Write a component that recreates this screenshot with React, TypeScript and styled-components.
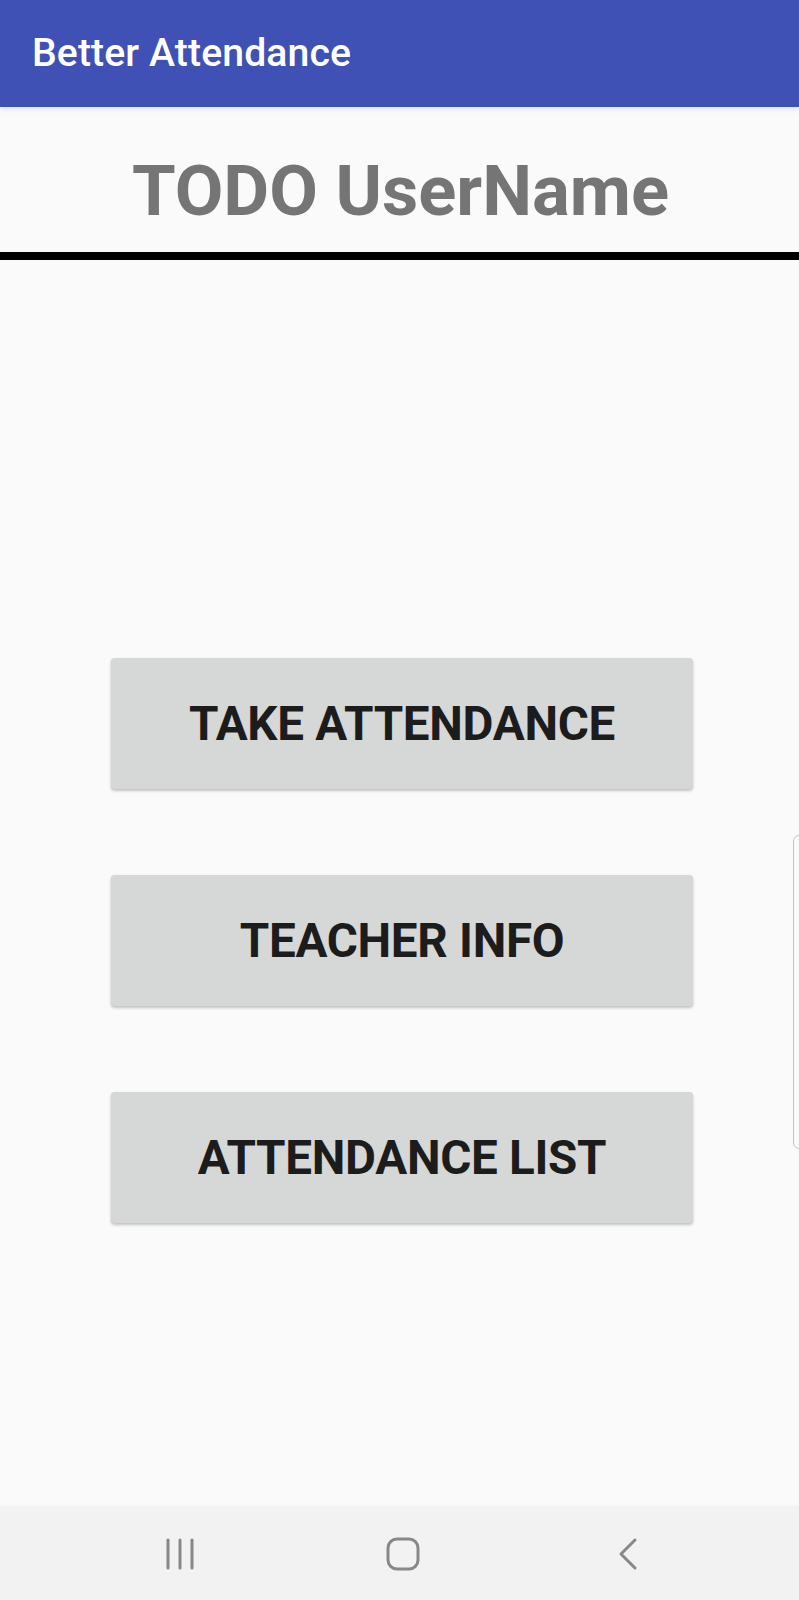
import React from "react";
import styled, { createGlobalStyle } from "styled-components";

const GlobalStyle = createGlobalStyle`
  html, body {
    margin: 0;
    padding: 0;
    background: #fafafa;
    font-family: Roboto, "Noto Sans", "Liberation Sans", sans-serif;
  }
  * { box-sizing: border-box; }
`;

const Screen = styled.div`
  position: relative;
  width: 799px;
  height: 1600px;
  display: flex;
  flex-direction: column;
  background: #fafafa;
  overflow: hidden;
`;

const AppBar = styled.header`
  height: 107px;
  flex: none;
  display: flex;
  align-items: center;
  padding-left: 32px;
  padding-bottom: 2px;
  background: #3f51b5;
  box-shadow: 0 2px 5px rgba(0, 0, 0, 0.12);
  position: relative;
  z-index: 1;
`;

const AppTitle = styled.h1`
  margin: 0;
  color: #ffffff;
  font-size: 39.2px;
  font-weight: 500;
  letter-spacing: 0.1px;
`;

const UserHeader = styled.div`
  height: 153px;
  flex: none;
  display: flex;
  align-items: center;
  justify-content: center;
  padding-top: 24px;
  border-bottom: 8px solid #000000;
`;

const UserName = styled.h2`
  margin: 0;
  color: #757575;
  font-size: 70.6px;
  font-weight: 700;
  line-height: 1;
  padding-left: 2px;
`;

const Main = styled.main`
  flex: 1;
  display: flex;
  flex-direction: column;
  gap: 86px;
  padding: 398px 0 0 111px;
`;

const ActionButton = styled.button`
  width: 582px;
  height: 131px;
  border: none;
  border-radius: 4px;
  background: #d6d7d7;
  color: #1c1c1c;
  font-family: Roboto, "Noto Sans", "Liberation Sans", sans-serif;
  font-size: 47.6px;
  font-weight: 700;
  letter-spacing: -0.3px;
  text-transform: uppercase;
  box-shadow: 0 2px 3px rgba(0, 0, 0, 0.22), 0 0 1px rgba(0, 0, 0, 0.1);
  cursor: pointer;
  padding: 0;
`;

const NavBar = styled.nav`
  height: 94px;
  flex: none;
  display: flex;
  align-items: center;
  padding-top: 2px;
  background: #f2f2f2;
`;

const NavSlot = styled.div<{ $left: number }>`
  flex: none;
  width: 40px;
  height: 40px;
  display: flex;
  align-items: center;
  justify-content: center;
  margin-left: ${(p) => p.$left}px;
`;

const EdgeHandle = styled.div`
  position: absolute;
  right: -6px;
  top: 835px;
  width: 12px;
  height: 314px;
  border: 1.5px solid #c4c4c4;
  border-radius: 6px;
`;

const RecentsIcon = () => (
  <svg width="30" height="32" viewBox="0 0 30 32" fill="none" stroke="#888888" strokeWidth="3" strokeLinecap="round">
    <line x1="3" y1="2" x2="3" y2="30" />
    <line x1="15" y1="2" x2="15" y2="30" />
    <line x1="27" y1="2" x2="27" y2="30" />
  </svg>
);

const HomeIcon = () => (
  <svg width="34" height="34" viewBox="0 0 34 34" fill="none" stroke="#888888" strokeWidth="3">
    <rect x="2" y="2" width="30" height="30" rx="9" />
  </svg>
);

const BackIcon = () => (
  <svg width="20" height="34" viewBox="0 0 20 34" fill="none" stroke="#888888" strokeWidth="3" strokeLinecap="round" strokeLinejoin="round">
    <polyline points="17,3 3,17 17,31" />
  </svg>
);

export default function App() {
  return (
    <>
      <GlobalStyle />
      <Screen>
        <AppBar>
          <AppTitle>Better Attendance</AppTitle>
        </AppBar>
        <UserHeader>
          <UserName>TODO UserName</UserName>
        </UserHeader>
        <Main>
          <ActionButton>Take Attendance</ActionButton>
          <ActionButton>Teacher Info</ActionButton>
          <ActionButton>Attendance List</ActionButton>
        </Main>
        <NavBar>
          <NavSlot $left={160}>
            <RecentsIcon />
          </NavSlot>
          <NavSlot $left={183}>
            <HomeIcon />
          </NavSlot>
          <NavSlot $left={185}>
            <BackIcon />
          </NavSlot>
        </NavBar>
        <EdgeHandle />
      </Screen>
    </>
  );
}
